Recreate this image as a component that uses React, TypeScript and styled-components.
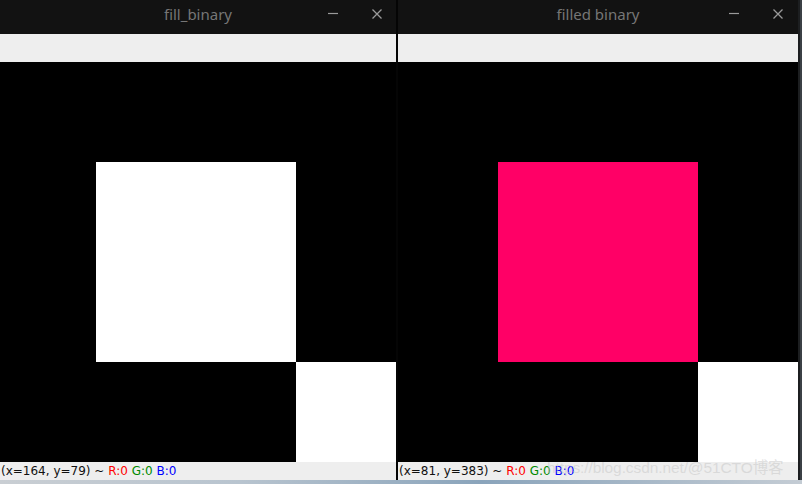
import React from "react";
import styled, { createGlobalStyle } from "styled-components";

const Global = createGlobalStyle`
  html, body { margin: 0; padding: 0; background: #000; }
  body { width: 802px; height: 484px; overflow: hidden; }
  #root { width: 802px; height: 484px; }
`;

const Desktop = styled.div`
  width: 802px;
  height: 484px;
  display: flex;
  flex-direction: column;
  background: #000;
`;

const Row = styled.div`
  display: flex;
  height: 480px;
`;

const BottomStrip = styled.div`
  height: 4px;
  background: linear-gradient(90deg, #c9ced3 0%, #b8c4cf 30%, #8aa4bb 60%, #c4ccd4 100%);
`;

const Window = styled.div<{ $w: number }>`
  width: ${(p) => p.$w}px;
  display: flex;
  flex-direction: column;
  overflow: hidden;
  position: relative;
`;

const Separator = styled.div`
  width: 2px;
  background: #050505;
`;

const EdgeShade = styled.div`
  width: 4px;
  display: flex;
  & > div:first-child { width: 2px; background: #1c1e20; }
  & > div:last-child { width: 2px; background: #3b4045; }
`;

const TitleBar = styled.div`
  height: 34px;
  background: #121212;
  display: flex;
  align-items: center;
  justify-content: center;
  position: relative;
  font-family: "Noto Sans", "Open Sans", sans-serif;
  font-size: 15px;
  color: #767676;
  padding-bottom: 7px;
  box-sizing: border-box;
`;

const Controls = styled.div<{ $right: number }>`
  position: absolute;
  right: ${(p) => p.$right}px;
  top: 4px;
  display: flex;
  gap: 24px;
  align-items: center;
`;

const Ctl = styled.div`
  width: 20px;
  height: 20px;
  display: flex;
  align-items: center;
  justify-content: center;
`;

const ToolBand = styled.div`
  height: 28px;
  background: #eeeeee;
`;

const ImageView = styled.div<{ $shift: number }>`
  height: 400px;
  width: 400px;
  margin-left: ${(p) => -p.$shift}px;
  display: grid;
  grid-template-columns: 100px 200px 100px;
  grid-template-rows: 100px 200px 100px;
  background: #000;
`;

const Cell = styled.div<{ $c: string }>`
  background: ${(p) => p.$c};
`;

const StatusBar = styled.div`
  height: 18px;
  background: #eeeeee;
  font-family: "DejaVu Sans", "Liberation Sans", sans-serif;
  font-size: 12px;
  line-height: 18px;
  color: #111;
  padding-left: 1px;
  white-space: nowrap;
  position: relative;
`;

const Chan = styled.span<{ $c: string }>`
  color: ${(p) => p.$c};
`;

const Watermark = styled.span`
  position: absolute;
  left: 149px;
  top: -3px;
  font-family: "Liberation Sans", "Noto Sans CJK SC", sans-serif;
  font-size: 15.5px;
  letter-spacing: -0.1px;
  color: rgba(200, 200, 200, 0.55);
  pointer-events: none;
`;

const Minimize = () => (
  <svg width="12" height="12" viewBox="0 0 12 12">
    <line x1="1" y1="5.5" x2="11" y2="5.5" stroke="#9a9a9a" strokeWidth="1.2" />
  </svg>
);

const Close = () => (
  <svg width="12" height="12" viewBox="0 0 12 12">
    <path d="M1.5 1.5 L10.5 10.5 M10.5 1.5 L1.5 10.5" stroke="#9a9a9a" strokeWidth="1.3" />
  </svg>
);

const Picture = ({ fill, shift }: { fill: string; shift: number }) => (
  <ImageView $shift={shift}>
    <Cell $c="#000" />
    <Cell $c="#000" />
    <Cell $c="#000" />
    <Cell $c="#000" />
    <Cell $c={fill} />
    <Cell $c="#000" />
    <Cell $c="#000" />
    <Cell $c="#000" />
    <Cell $c="#fff" />
  </ImageView>
);

const CvWindow = ({
  title,
  width,
  fill,
  shift,
  x,
  y,
  ctlRight,
  watermark,
}: {
  title: string;
  width: number;
  fill: string;
  shift: number;
  x: number;
  y: number;
  ctlRight: number;
  watermark?: boolean;
}) => (
  <Window $w={width}>
    <TitleBar>
      {title}
      <Controls $right={ctlRight}>
        <Ctl><Minimize /></Ctl>
        <Ctl><Close /></Ctl>
      </Controls>
    </TitleBar>
    <ToolBand />
    <Picture fill={fill} shift={shift} />
    <StatusBar>
      (x={x}, y={y}) ~ <Chan $c="#ff0000">R:0</Chan> <Chan $c="#008a00">G:0</Chan>{" "}
      <Chan $c="#0000ff">B:0</Chan>
      {watermark && <Watermark>https://blog.csdn.net/@51CTO博客</Watermark>}
    </StatusBar>
  </Window>
);

export default function App() {
  return (
    <Desktop>
      <Global />
      <Row>
        <CvWindow title="fill_binary" width={396} fill="#ffffff" shift={4} x={164} y={79} ctlRight={9} />
        <Separator />
        <CvWindow
          title="filled binary"
          width={400}
          fill="#ff0066"
          shift={0}
          x={81}
          y={383}
          ctlRight={10}
          watermark
        />
        <EdgeShade>
          <div />
          <div />
        </EdgeShade>
      </Row>
      <BottomStrip />
    </Desktop>
  );
}
